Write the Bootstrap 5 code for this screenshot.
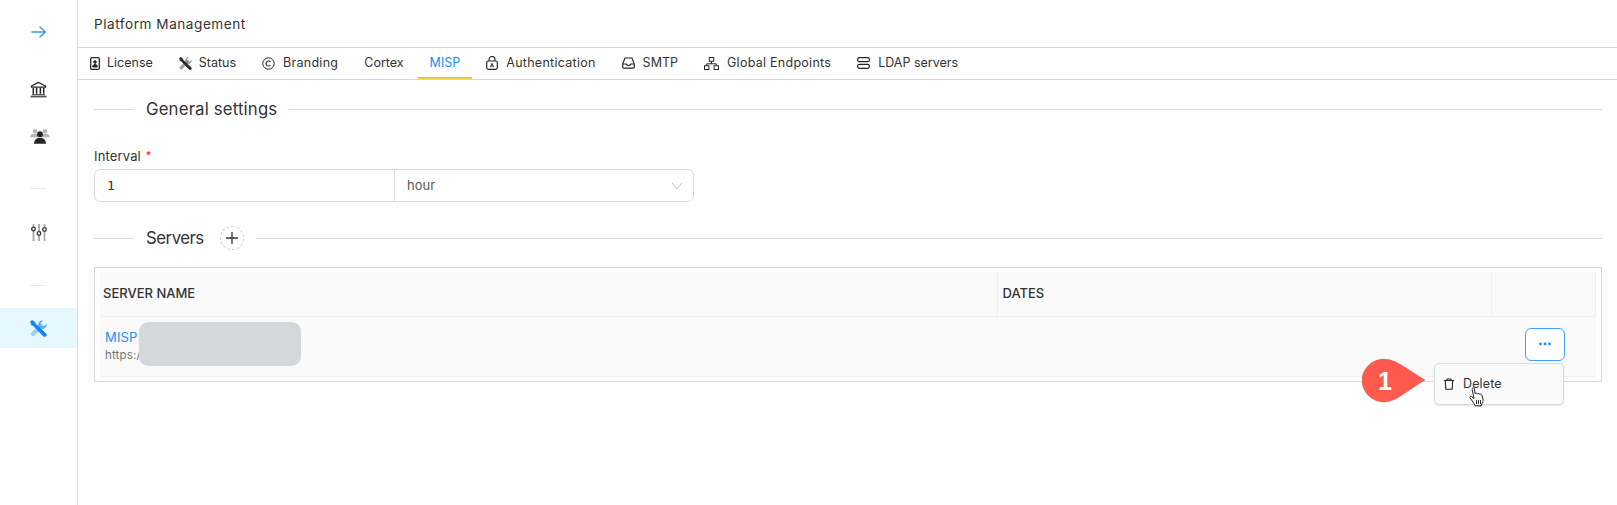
<!DOCTYPE html>
<html lang="en">
<head>
<meta charset="utf-8">
<title>Platform Management</title>
<link href="https://cdn.jsdelivr.net/npm/bootstrap@5.3.0/dist/css/bootstrap.min.css" rel="stylesheet">
<style>
html,body{height:505px;overflow:hidden}
body{font-family:Inter,"Open Sans",sans-serif;color:#333;background:#fff;font-size:13px;letter-spacing:.012em}
.side-rail{width:78px;height:505px;border-right:1px solid #d9d9d9;flex:none}
.rail-item{height:40px;color:#333}
.rail-item.mt-a{margin-top:12px}
.rail-item.mt-b{margin-top:17px}
.rail-item.mt-c{margin-top:7px}
.rail-item.mt-d{margin-top:23px}
.rail-item.active-item{background:#e6f7ff;margin-top:22px}
.people-icon{margin-left:3px}
.rail-rule{width:16px;height:1px;background:#e8e8e8;margin-left:30px}
.rail-rule.r1{margin-top:32px}
.rail-rule.r2{margin-top:33px}
.main-pane{min-width:0}
.page-head{height:48px;border-bottom:1px solid #d9d9d9;padding:2px 0 0 16px;font-size:13.6px;letter-spacing:.53px}
.tab-strip{height:32px;border-bottom:1px solid #d9d9d9;padding-left:0;gap:2px;flex-wrap:nowrap}
.tab-link{height:31px;padding:1px 12px 0;color:#333;font-size:12.5px;letter-spacing:0;gap:8px;white-space:nowrap;border-bottom:2px solid transparent}
.tab-link.active-tab{color:#1890ff;border-bottom-color:#e8c93c}
.tab-link.tight-tab{gap:7px}
.tab-link.wide-tab{letter-spacing:.27px}
.body-pane{padding:0 15px 0 16px}
.sect-title{font-size:16.8px;color:#333;line-height:24px}
.sect-title.tight-title{letter-spacing:-.5px}
.sect-line{height:1px;background:#d9d9d9}
.sect-line.lead-line{width:40px;flex:none;margin-right:12px}
.sect-line.fill-line{flex:1;margin-left:12px}
.sect-a{margin-top:17px}
.field-label{font-size:13px;margin-top:25px;margin-bottom:2px;line-height:20px}
.req{color:#f5222d;font-size:11px;margin-left:1px;position:relative;top:-2px}
.interval-group{width:600px}
.interval-group .form-control,.interval-group .form-select{height:33px;min-height:0;font-size:13px;border-color:#d9d9d9;color:#333;box-shadow:none}
.interval-group .form-control{font-family:"DejaVu Sans Mono",monospace;padding:0 12px;border-radius:6px 0 0 6px;flex:0 0 301px;font-size:13px}
.interval-group .form-select{padding:0 12px;color:#595959;background-size:12px 8px;background-position:right 10px center;border-radius:0 6px 6px 0;background-image:url("data:image/svg+xml,%3csvg xmlns='http://www.w3.org/2000/svg' viewBox='0 0 12 8'%3e%3cpath fill='none' stroke='%23bfbfbf' d='M1 1l5 6 5-6'/%3e%3c/svg%3e")}
.sect-b{margin-top:24px}
.add-circle{width:24px;height:24px;border:1px dashed #d0d0d0;border-radius:50%;margin-left:16px;background:#fff;padding:0;color:#333}
.sect-b .fill-line{margin-left:12px}
.table-box{border:1px solid #d9d9d9;margin-top:17px;padding:4px 5px;height:115px;position:relative}
.srv-table{margin:0;font-size:13px;table-layout:fixed;width:100%;--bs-table-bg:#fafafa;--bs-table-border-color:#efefef;--bs-table-color:#333}
.srv-table th{font-weight:500;height:44px;padding:0 3px 0 3px;vertical-align:middle;border-right:1px solid #efefef;letter-spacing:0}
.srv-table th+th{padding-left:5px}
.srv-table td{height:60px;padding:1px 0 0 5px;vertical-align:middle;position:relative;border-bottom:1px solid #efefef}
.srv-name{color:#1890ff;font-size:13px;line-height:20px;margin-top:-3px}
.srv-url{color:#777;font-size:11.5px;line-height:16px}
.redact{position:absolute;left:39px;top:5px;width:162px;height:44px;background:#d4d7db;border-radius:9px}
.more-btn{position:absolute;right:31px;top:11px;width:40px;height:33px;border:1.5px solid #40a0ff;border-radius:6px;background:#fff;padding:0;color:#1890ff;line-height:1}
.row-menu{position:absolute;left:1434px;top:363px;width:130px;height:42px;min-width:0;padding:0;background:#fafafa;border:1px solid #dcdcdc;border-radius:5px;box-shadow:0 1px 2px rgba(0,0,0,.12);font-size:12.5px}
.row-menu .dropdown-item{height:100%;padding:0 0 0 9px;gap:9px;color:#333;border-radius:5px}
.pointer-hand{position:absolute;left:1469px;top:387px;z-index:1100}
.callout{position:absolute;left:1362px;top:359px;width:64px;height:44px;z-index:1100}
.callout-num{position:absolute;left:1373px;top:366px;width:24px;text-align:center;color:#fff;font:700 25px/30px "Liberation Sans",sans-serif;letter-spacing:0;z-index:1101}
</style>
</head>
<body>
<div class="d-flex">
  <aside class="side-rail d-flex flex-column">
    <div class="rail-item mt-a d-flex align-items-center justify-content-center">
      <svg width="16" height="14" viewBox="0 0 16 14" fill="none" stroke="#3b96f5" stroke-width="1.3"><path d="M.5 7h14M8.500 1.500 14.300 7l-5.800 5.500"/></svg>
    </div>
    <div class="rail-item mt-b d-flex align-items-center justify-content-center">
      <svg width="17" height="17" viewBox="0 0 18 17" fill="none" stroke="#222"><path d="M9 1 1.500 4.800v1.200h15V4.800z" stroke-width="1.300"/><path d="M3.500 7v6M7 7v6M11 7v6M14.500 7v6" stroke-width="1.600"/><path d="M2 14h14" stroke-width="1"/><path d="M.5 16h17" stroke="#555" stroke-width="1.800"/></svg>
    </div>
    <div class="rail-item mt-c d-flex align-items-center justify-content-center">
      <svg class="people-icon" width="20" height="16" viewBox="0 0 22 17"><g fill="#b5b5b5"><circle cx="5.500" cy="3.200" r="2.500"/><circle cx="16.500" cy="3.200" r="2.500"/><path d="M0 10c0-3 2.500-4 5.500-4S9 7 9 10zM13 10c0-3 1-4 3.500-4s5.500 1 5.500 4z"/></g><circle cx="11" cy="6.500" r="3.200" fill="#262626"/><path d="M4.500 17c0-4.500 3-6.500 6.500-6.500s6.500 2 6.500 6.500z" fill="#262626"/></svg>
    </div>
    <div class="rail-rule r1"></div>
    <div class="rail-item mt-d d-flex align-items-center justify-content-center">
      <svg width="16" height="17" viewBox="0 0 16 17"><path d="M2.500 0v17M8 0v17M13.500 0v17" stroke="#a8a8a8" stroke-width="1.800"/><g fill="#fff" stroke="#333" stroke-width="1.300"><circle cx="2.500" cy="5" r="1.800"/><circle cx="8" cy="9.500" r="1.800"/><circle cx="13.500" cy="5.500" r="1.800"/></g></svg>
    </div>
    <div class="rail-rule r2"></div>
    <div class="rail-item active-item d-flex align-items-center justify-content-center">
      <svg width="17" height="17" viewBox="0 0 17 17"><path d="M3 14 11 6" stroke="#9fd0ff" stroke-width="4.500" stroke-linecap="round"/><path d="M13.200.300 10.600 3l.4 2.900 2.900.4 2.700-2.600c.4 3-2.200 5.800-5.300 5.200L8.300 6.200C7.900 3 10.200 0 13.200.300z" fill="#52a8fa"/><path d="M.6 1.600 1.800.4l2.800 1.500.4 1.700 10.700 10c1.700 1.800-.7 4-2.400 2.400L3.200 5.400 1.600 5z" stroke="#1283f0" stroke-width=".8" fill="#1283f0"/></svg>
    </div>
  </aside>

  <main class="main-pane flex-grow-1">
    <header class="page-head d-flex align-items-center">Platform Management</header>
    <nav class="nav tab-strip">
      <a class="nav-link tab-link tight-tab d-flex align-items-center" href="#"><svg width="10" height="13" viewBox="0 0 10 13" fill="none" stroke="#262626"><rect x=".7" y=".7" width="8.600" height="11.600" rx="1.200" stroke-width="1.300"/><circle cx="5" cy="5" r="1.300" fill="#262626"/><path d="M2.800 10c0-2 1-2.600 2.200-2.600S7.200 8 7.200 10z" fill="#262626"/></svg>License</a>
      <a class="nav-link tab-link tight-tab d-flex align-items-center" href="#"><svg width="13" height="13" viewBox="0 0 17 17"><path d="M3 14 11 6" stroke="#a5a5a5" stroke-width="4.500" stroke-linecap="round"/><path d="M13.200.300 10.600 3l.4 2.900 2.900.4 2.700-2.600c.4 3-2.200 5.800-5.300 5.200L8.300 6.200C7.900 3 10.200 0 13.200.300z" fill="#8c8c8c"/><path d="M.6 1.600 1.800.4l2.800 1.500.4 1.700 10.700 10c1.700 1.800-.7 4-2.400 2.400L3.200 5.400 1.600 5z" stroke="#262626" stroke-width=".8" fill="#262626"/></svg>Status</a>
      <a class="nav-link tab-link wide-tab d-flex align-items-center" href="#"><svg width="13" height="13" viewBox="0 0 13 13" fill="none" stroke="#262626"><circle cx="6.500" cy="6.500" r="5.700"/><path d="M8.500 5a2.500 2.500 0 1 0 0 3" stroke-width="1.100"/></svg>Branding</a>
      <a class="nav-link tab-link d-flex align-items-center" href="#">Cortex</a>
      <a class="nav-link tab-link active-tab d-flex align-items-center" href="#">MISP</a>
      <a class="nav-link tab-link wide-tab d-flex align-items-center" href="#"><svg width="12" height="14" viewBox="0 0 12 14" fill="none" stroke="#262626"><rect x=".7" y="5" width="10.600" height="8.300" rx="1.500" stroke-width="1.200"/><path d="M3 5V3.500a3 3 0 0 1 6 0V5" stroke-width="1.100"/><path d="M4.300 11.300 6 7.300l1.700 4M4.900 10h2.200" stroke-width=".9"/></svg>Authentication</a>
      <a class="nav-link tab-link d-flex align-items-center" href="#"><svg width="13" height="12" viewBox="0 0 13 12" fill="none" stroke="#262626" stroke-width="1.200"><path d="M3 1h7l2.300 6v3a1.200 1.200 0 0 1-1.200 1.200H1.900A1.200 1.200 0 0 1 .7 10V7z"/><path d="M.8 7h3.400c.3 1.200 1 1.500 2.300 1.500S8.500 8.200 8.800 7h3.400"/></svg>SMTP</a>
      <a class="nav-link tab-link wide-tab d-flex align-items-center" href="#"><svg width="15" height="13" viewBox="0 0 15 13" fill="none" stroke="#262626"><rect x="5.300" y=".5" width="4.400" height="3.800"/><rect x=".5" y="8.700" width="4.400" height="3.800"/><rect x="10.100" y="8.700" width="4.400" height="3.800"/><path d="M7.500 4.300v2.500M2.700 8.700V6.800h9.600v1.900"/></svg>Global Endpoints</a>
      <a class="nav-link tab-link d-flex align-items-center" href="#"><svg width="13" height="12" viewBox="0 0 13 12" fill="none" stroke="#262626" stroke-width="1.200"><rect x=".7" y=".7" width="11.600" height="4" rx="1.500"/><rect x=".7" y="7.300" width="11.600" height="4" rx="1.500"/></svg>LDAP servers</a>
    </nav>

    <section class="body-pane">
      <div class="d-flex align-items-center sect-a">
        <span class="sect-line lead-line"></span><span class="sect-title">General settings</span><span class="sect-line fill-line"></span>
      </div>
      <div class="field-label">Interval <span class="req">*</span></div>
      <div class="input-group interval-group">
        <input class="form-control" type="text" value="1" aria-label="Interval">
        <select class="form-select" aria-label="Unit"><option>hour</option></select>
      </div>
      <div class="d-flex align-items-center sect-b">
        <span class="sect-line lead-line"></span><span class="sect-title tight-title">Servers</span>
        <button class="add-circle d-flex align-items-center justify-content-center" type="button" aria-label="Add"><svg width="12" height="12" viewBox="0 0 12 12" stroke="#333" stroke-width="1.300"><path d="M6 0v12M0 6h12"/></svg></button>
        <span class="sect-line fill-line"></span>
      </div>
      <div class="table-box">
        <table class="table srv-table">
          <colgroup><col style="width:897px"><col style="width:494px"><col></colgroup>
          <thead><tr><th>SERVER NAME</th><th>DATES</th><th></th></tr></thead>
          <tbody>
            <tr>
              <td>
                <div class="srv-name">MISP</div>
                <div class="srv-url">https:/</div>
                <div class="redact"></div>
              </td>
              <td></td>
              <td>
                <button class="more-btn d-flex align-items-center justify-content-center" type="button" aria-label="More"><svg width="14" height="4" viewBox="0 0 14 4" fill="#1890ff"><circle cx="2.500" cy="2" r="1.400"/><circle cx="7" cy="2" r="1.400"/><circle cx="11.500" cy="2" r="1.400"/></svg></button>
              </td>
            </tr>
          </tbody>
        </table>
      </div>
    </section>
  </main>
</div>

<div class="dropdown-menu show row-menu">
  <a class="dropdown-item d-flex align-items-center" href="#"><svg width="10" height="12" viewBox="0 0 10 12" fill="none" stroke="#262626" stroke-width="1.100"><path d="M0 2.500h10M3 2.500V1h4v1.500M1.300 2.500l.5 8.800h6.400l.5-8.800"/></svg>Delete</a>
</div>

<svg class="callout" viewBox="0 0 64 44"><path d="M22 0C34 0 46 11 63 21 46 31 34 43 22 43 10 43 0 33 0 21.500S10 0 22 0z" fill="#ff5a4d" stroke="#b9524a" stroke-width=".4"/></svg>
<div class="callout-num">1</div>

<svg class="pointer-hand" width="16" height="20" viewBox="0 0 16 20"><path d="M3.500 1.200c.8-.7 1.900-.2 2 .8l.5 4.500c1-.5 1.800-.4 2.400.2 1-.4 1.800-.2 2.300.4 1-.2 2 .2 2.300 1.200l1 4.200c.3 1.500-.2 3-1 4l-.8 2.300H6l-1-2.200L1 10.800c-.5-1 .6-2 1.600-1.300L5 11.500 3.200 2.500c-.1-.5 0-1 .3-1.300z" fill="#fff" stroke="#222" stroke-width="1"/><path d="M7.500 13v4M9.500 13v4M11.500 13v4" stroke="#333"/></svg>
</body>
</html>
